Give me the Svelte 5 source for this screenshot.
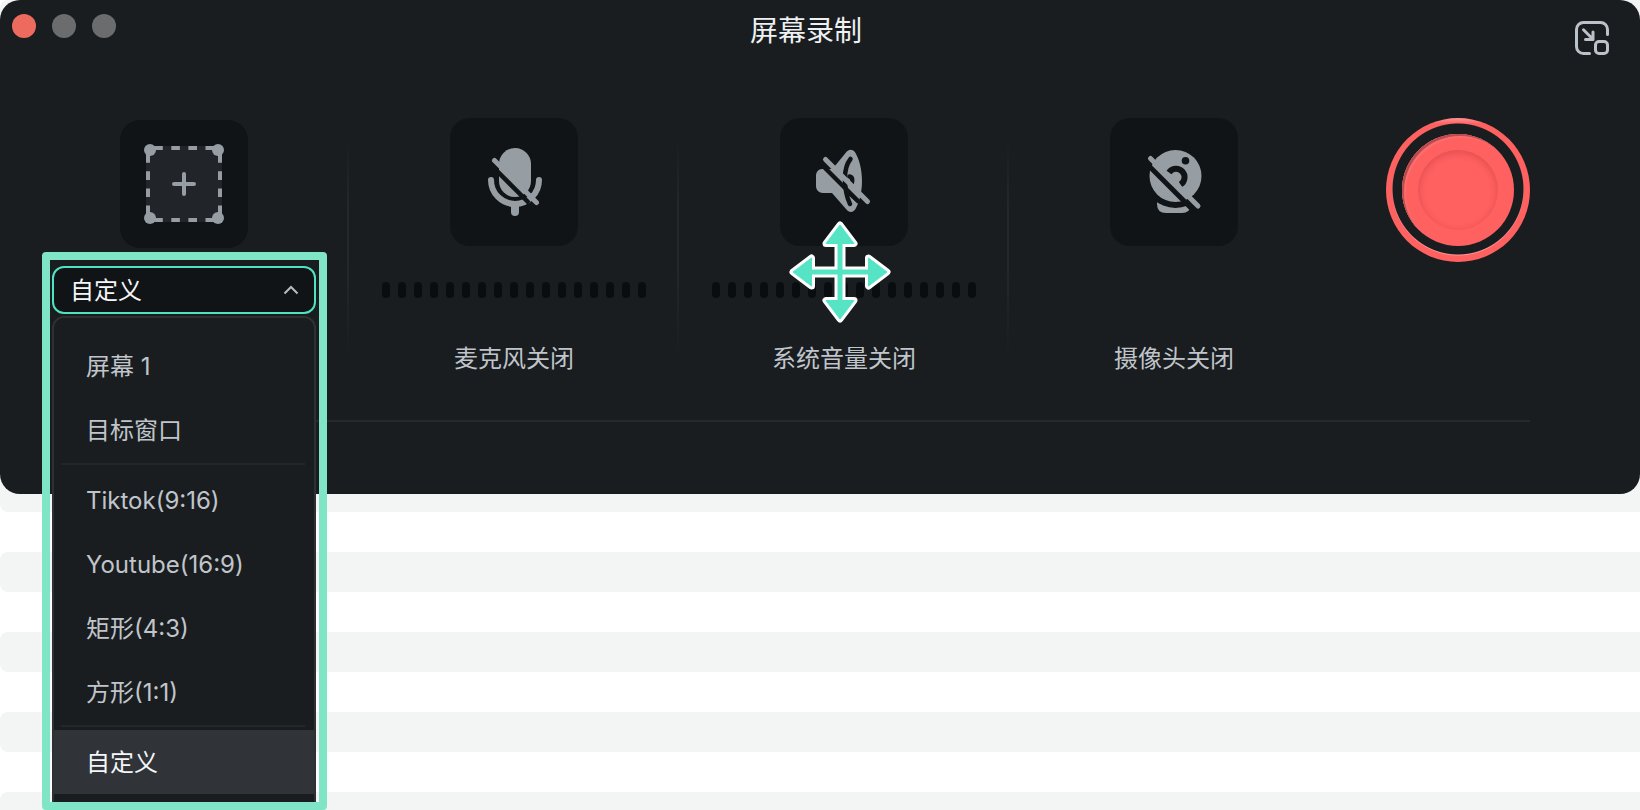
<script>
  const groups = [
    ['屏幕 1', '目标窗口'],
    ['Tiktok(9:16)', 'Youtube(16:9)', '矩形(4:3)', '方形(1:1)'],
    ['自定义']
  ];
  let area = $state('自定义');
  const stripes = Array.from({ length: 21 });
  const bars = Array.from({ length: 17 });
</script>

<div class="page">
  <div class="backdrop" aria-hidden="true">
    {#each stripes as _}<div class="stripe"></div>{/each}
  </div>

  <main class="window">
    <header class="titlebar">
      <div class="lights">
        <button class="light close" aria-label="关闭"></button>
        <button class="light" aria-label="最小化"></button>
        <button class="light" aria-label="缩放"></button>
      </div>
      <h1>屏幕录制</h1>
      <button class="pip" aria-label="迷你模式">
        <svg viewBox="0 0 34 34" width="34" height="34" fill="none" stroke="#bcc2c9" stroke-width="3" stroke-linecap="round" stroke-linejoin="round">
          <path d="M32.500 13.500V8.500a7 7 0 0 0-7-7H8.500a7 7 0 0 0-7 7v17a7 7 0 0 0 7 7h6" />
          <rect x="20.500" y="20.500" width="12" height="12" rx="3.500" />
          <path d="M8.500 8.800l9 9M18 11v7.500h-7.500" />
        </svg>
      </button>
    </header>

    <div class="controls">
      <section class="cell region">
        <button class="tile" aria-label="录制区域">
          <svg viewBox="0 0 128 128" width="128" height="128">
            <rect x="26" y="26" width="76" height="76" fill="#212429" />
            <g stroke="#969da3" stroke-width="4" stroke-dasharray="8.600 8.500">
              <path d="M34.200 28H94M34.200 100H94M28 34.200V94M100 34.200V94" />
            </g>
            <g fill="#969da3">
              <circle cx="30" cy="30" r="6" /><circle cx="98" cy="30" r="6" />
              <circle cx="30" cy="98" r="6" /><circle cx="98" cy="98" r="6" />
            </g>
            <path d="M54 64h20M64 54v20" stroke="#969da3" stroke-width="4" stroke-linecap="round" />
          </svg>
        </button>

        <div class="picker">
          <div class="field">
            <select bind:value={area} aria-label="录制区域">
              {#each groups.flat() as name}<option>{name}</option>{/each}
            </select>
            <svg viewBox="0 0 16 10" width="16" height="10" fill="none" stroke="#b9bcbe" stroke-width="2">
              <path d="M1.500 8.500L8 2l6.500 6.500" />
            </svg>
          </div>
          <div class="menu" role="listbox" aria-label="录制区域">
            {#each groups as group}
              <div class="group" role="group">
                {#each group as name}
                  <button class="item" class:selected={name === area} role="option" aria-selected={name === area} onclick={() => (area = name)}>{name}</button>
                {/each}
              </div>
            {/each}
          </div>
        </div>
      </section>

      <section class="cell">
        <button class="tile" aria-label="麦克风">
          <svg viewBox="0 0 128 128" width="128" height="128" fill="none" stroke-linecap="round">
            <rect x="49" y="30" width="32" height="49" rx="16" fill="#969da3" />
            <path d="M41 62a24 24 0 0 0 48 0" stroke="#969da3" stroke-width="6" />
            <path d="M65 87v7" stroke="#969da3" stroke-width="8" />
            <path d="M40.500 46.500L79 85" stroke="#111417" stroke-width="4.500" stroke-linecap="butt" />
            <path d="M44.500 42.500L86.500 84.500" stroke="#969da3" stroke-width="5" />
          </svg>
        </button>
        <div class="meter">{#each bars as _}<span></span>{/each}</div>
        <p>麦克风关闭</p>
      </section>

      <section class="cell">
        <button class="tile" aria-label="系统音量">
          <svg viewBox="0 0 128 128" width="128" height="128" fill="none" stroke-linecap="round" stroke-linejoin="round">
            <path d="M42 51h8c2 0 3-1 4.500-2.500L66 34.500c3-4 7-3.500 9.500.5 3.500 6 6.500 16 6.500 28s-3 22-6.500 28c-2.500 4-6.500 4-9.500 0L52 75h-9c-4 0-7-3-7-7V58c0-4 2.500-7 6-7z" fill="#969da3" />
            <path d="M70.500 41c-4 5-5.500 12-5.500 19 0 10 1.500 19 5 26" stroke="#111417" stroke-width="4.500" />
            <path d="M69.500 58.500c3 .5 3 3 2.500 6" stroke="#111417" stroke-width="4.500" />
            <path d="M41 46l38 38" stroke="#111417" stroke-width="4.500" stroke-linecap="butt" />
            <path d="M69 76l9 8" stroke="#111417" stroke-width="2.500" />
            <path d="M45.500 41.500L87.500 83.500" stroke="#969da3" stroke-width="5" />
          </svg>
        </button>
        <div class="meter">{#each bars as _}<span></span>{/each}</div>
        <p>系统音量关闭</p>
        <svg class="move" viewBox="0 0 102 102" width="102" height="102" stroke-linejoin="round" aria-hidden="true">
          <defs>
            <path id="move-shape" d="M51 4L65 22.500H53V49H79.500V37L98 51 79.500 65V53H53V79.500H65L51 98 37 79.500H49V53H22.500V65L4 51 22.500 37V49H49V22.500H37z" />
          </defs>
          <use href="#move-shape" fill="#fff" stroke="#fff" stroke-width="7" />
          <use href="#move-shape" fill="#55e5c5" stroke="#55e5c5" stroke-width="1" />
        </svg>
      </section>

      <section class="cell">
        <button class="tile" aria-label="摄像头">
          <svg viewBox="0 0 128 128" width="128" height="128" fill="none" stroke-linecap="round">
            <path d="M47 82h34v5q-1 8-9 8H56q-9 0-9-9z" fill="#969da3" />
            <circle cx="65.500" cy="58" r="32" fill="#111417" />
            <circle cx="65.500" cy="58" r="26" fill="#969da3" />
            <circle cx="75.500" cy="42.800" r="3.800" fill="#111417" />
            <path d="M59 54.500a8.500 8.500 0 1 1 11.500 12" stroke="#111417" stroke-width="6" stroke-linecap="butt" />
            <path d="M36.500 45.500L84 93" stroke="#111417" stroke-width="5" stroke-linecap="butt" />
            <path d="M40.500 40.500L88 88" stroke="#969da3" stroke-width="5" />
          </svg>
        </button>
        <div class="meter"></div>
        <p>摄像头关闭</p>
      </section>

      <button class="record" aria-label="开始录制"><span class="disc"><span class="dish"></span></span></button>
    </div>
    <hr />
  </main>
</div>

<style>
  :global(body) {
    margin: 0;
    background: #fff;
  }
  .page {
    display: grid;
    min-height: 100vh;
    overflow: hidden;
    font-family: Inter, 'Noto Sans CJK SC', sans-serif;
    color: #c0c5cb;
  }
  .page > * {
    grid-area: 1 / 1;
  }
  button {
    border: 0;
    padding: 0;
    background: none;
    font: inherit;
    color: inherit;
    cursor: pointer;
  }
  svg {
    display: block;
  }
  .backdrop {
    height: 100vh;
    overflow: hidden;
    display: flex;
    flex-direction: column;
    justify-content: flex-start;
  }
  .stripe {
    flex: none;
    height: 40px;
  }
  .stripe:first-child {
    height: 32px;
  }
  .stripe:nth-child(odd) {
    background: #f3f5f4;
    border-radius: 8px 0 0 8px;
  }
  .window {
    align-self: start;
    position: relative;
    box-sizing: border-box;
    padding-bottom: 72px;
    border-radius: 20px;
    background: #191d1f;
  }
  .titlebar {
    display: grid;
    grid-template-columns: 1fr auto 1fr;
    align-items: start;
    padding: 14px 31px 0 3px;
    height: 104px;
  }
  .lights {
    display: flex;
    gap: 16px;
    margin-left: 9px;
  }
  .light {
    width: 24px;
    height: 24px;
    border-radius: 50%;
    background: #6b6c6e;
  }
  .close {
    background: #ed6a5e;
  }
  h1 {
    margin: 0;
    font-size: 28px;
    line-height: 34px;
    font-weight: 400;
    color: #eef0f2;
  }
  .pip {
    justify-self: end;
    margin-top: 7px;
  }
  .controls {
    display: grid;
    grid-template-columns: repeat(4, 330fr) 191fr;
    padding: 0 110px 0 19px;
  }
  .cell {
    position: relative;
    display: flex;
    flex-direction: column;
    align-items: center;
    background: linear-gradient(transparent 20px, #24282b 90px, #24282b 150px, transparent 240px) right / 2px 100% no-repeat;
  }
  .cell:nth-child(4) {
    background: none;
  }
  .tile {
    width: 128px;
    height: 128px;
    border-radius: 20px;
    background: #111417;
  }
  .region .tile {
    margin-top: 2px;
  }
  .meter {
    display: flex;
    gap: 8px;
    height: 16px;
    margin-top: 36px;
  }
  .meter span {
    width: 8px;
    border-radius: 4px;
    background: #0a0d0f;
  }
  p {
    margin: 44px 0 0;
    font-size: 24px;
    line-height: 34px;
  }
  .move {
    position: absolute;
    top: 103px;
    left: calc(50% - 55px);
  }
  .record {
    display: grid;
    place-items: center;
    justify-self: end;
    align-self: start;
    width: 144px;
    height: 144px;
    border-radius: 50%;
    background:
      radial-gradient(circle at 50% 71px, #191d1f 65px, transparent 66px),
      radial-gradient(circle at 50% 50%, #ff9494 65px, transparent 66px),
      linear-gradient(#ff9494, #ff6161 6px);
  }
  .disc {
    display: grid;
    place-items: center;
    width: 112px;
    height: 112px;
    border-radius: 50%;
    background: #ff6161;
    box-shadow: inset 2px 2px 1px #b9494b, inset 3px 3px 2px #ff7c7c;
  }
  .dish {
    width: 80px;
    height: 80px;
    border-radius: 50%;
    box-shadow: inset 0 2px 8px #e04c4d;
  }
  hr {
    height: 2px;
    margin: 44px 110px 0;
    border: 0;
    background: #26292c;
  }

  .picker {
    position: absolute;
    z-index: 1;
    top: 134px;
    left: calc(50% - 142px);
    box-sizing: border-box;
    width: 285px;
    padding: 6px 3px 0 2px;
    border: 8px solid #80e5c7;
    border-radius: 4px;
    font-size: 24px;
  }
  .field {
    display: grid;
    align-items: center;
  }
  .field > * {
    grid-area: 1 / 1;
  }
  .field svg {
    justify-self: end;
    margin-right: 17px;
    pointer-events: none;
  }
  select {
    appearance: none;
    box-sizing: border-box;
    width: 100%;
    height: 48px;
    padding: 0 40px 0 16px;
    border: 2px solid #50e3c2;
    border-radius: 12px;
    background: #111417;
    font: inherit;
    color: #f4f6f8;
  }
  .menu {
    margin-top: 2px;
    padding: 16px 0 8px;
    border: 2px solid #2d3134;
    border-bottom: 0;
    border-radius: 12px 12px 0 0;
    background: #191d1f;
  }
  .group + .group::before {
    content: '';
    display: block;
    height: 2px;
    margin: 1px 9px 3px 7px;
    background: #23272a;
  }
  .item {
    display: block;
    width: 100%;
    height: 64px;
    padding: 2px 0 0 32px;
    line-height: 62px;
    text-align: left;
  }
  .selected {
    background: #303438;
    color: #f4f6f8;
  }
</style>
